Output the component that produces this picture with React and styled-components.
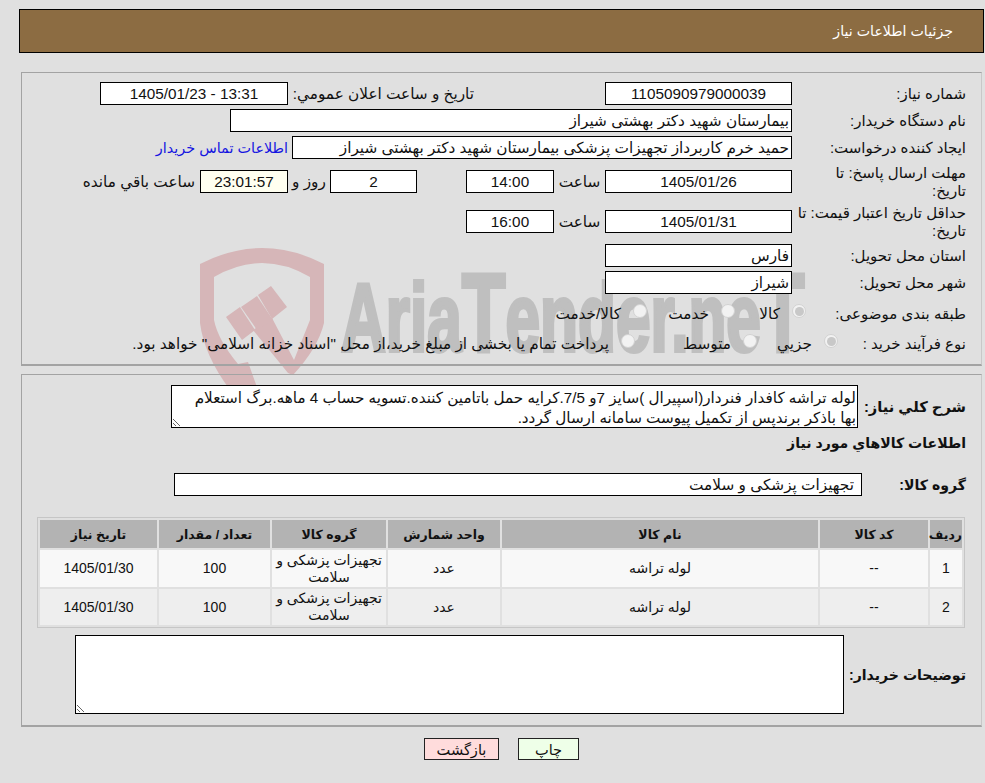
import React from 'react';
import styled, { createGlobalStyle } from 'styled-components';

const GlobalStyle = createGlobalStyle`
  html {
    background: #e0e0e0;
  }
  body {
    margin: 0;
    width: 985px;
    height: 783px;
    overflow: hidden;
    font-family: "Liberation Sans", "DejaVu Sans", sans-serif;
    font-size: 15.3px;
    color: #111;
  }
`;

const Page = styled.div`
  position: relative;
  direction: rtl;
  width: 985px;
  height: 783px;
  padding: 9px 1px 0 19px;
  box-sizing: border-box;
`;

const Watermark = styled.svg`
  position: absolute;
  z-index: -1;
  left: 190px;
  top: 240px;
  width: 640px;
  height: 160px;
  pointer-events: none;
`;

const Header = styled.header`
  height: 44px;
  box-sizing: border-box;
  border: 1px solid #000;
  background: #8c6c42;
  color: #fff;
  font-size: 14.2px;
  display: flex;
  align-items: center;
  padding: 0 30px 0 0;
`;

const Panel = styled.section`
  box-sizing: border-box;
  margin: ${p => p.$top}px 2px 0 2px;
  height: ${p => p.$height}px;
  border: 1px solid #a3a3a3;
  border-right-color: #c8c8c8;
  border-bottom-width: 2px;
  padding: ${p => p.$pad};
`;

const Row = styled.div`
  display: flex;
  align-items: center;
  height: ${p => p.$h || 23}px;
  margin-top: ${p => p.$top || 0}px;
  margin-bottom: ${p => p.$gap ?? 4}px;
`;

const Label = styled.div`
  width: ${p => p.$w || 174}px;
  flex: none;
  font-size: 15px;
  line-height: 18px;
  white-space: nowrap;
`;

const Box = styled.div`
  flex: none;
  box-sizing: border-box;
  width: ${p => p.$w}px;
  height: 23px;
  line-height: 21px;
  border: 1px solid #000;
  background: ${p => p.$bg || '#fff'};
  text-align: ${p => (p.$left ? 'right' : 'center')};
  padding: 0 ${p => p.$inset || 2}px 0 2px;
  white-space: nowrap;
  overflow: hidden;
  margin-left: ${p => p.$after || 0}px;
`;

const Inline = styled.span`
  flex: none;
  width: ${p => (p.$w ? `${p.$w}px` : 'auto')};
  text-align: ${p => (p.$center ? 'center' : 'right')};
  white-space: nowrap;
  margin-right: ${p => p.$before || 0}px;
`;

const ContactLink = styled.a`
  color: #1515e0;
  font-size: 14.4px;
  text-decoration: none;
  white-space: nowrap;
  margin-right: 4px;
`;

const Option = styled.label`
  flex: none;
  display: flex;
  align-items: center;
  gap: 12px;
  width: ${p => (p.$w ? `${p.$w}px` : 'auto')};
  white-space: nowrap;
`;

const Radio = styled.span`
  flex: none;
  display: inline-flex;
  align-items: center;
  justify-content: center;
  box-sizing: border-box;
  width: 14px;
  height: 14px;
  margin-bottom: 5px;
  border-radius: 50%;
  border: 1px solid #d2d2d2;
  background: #f2f2f2;
  &::after {
    content: '';
    display: ${p => (p.$on ? 'block' : 'none')};
    width: 9px;
    height: 9px;
    border-radius: 50%;
    background: #c8c8c8;
  }
`;

const Note = styled.textarea`
  display: block;
  flex: none;
  box-sizing: border-box;
  direction: rtl;
  width: ${p => p.$w}px;
  height: ${p => p.$h}px;
  margin: 0;
  padding: 2px 1px 0 2px;
  border: 1px solid #000;
  border-radius: 0;
  outline: none;
  background: #fff;
  color: #111;
  font: inherit;
  font-size: 15.2px;
  line-height: 20px;
  overflow: hidden;
`;

const BoldLabel = styled.div`
  flex: none;
  width: ${p => p.$w}px;
  font-weight: bold;
  font-size: ${p => p.$size || 14.1}px;
  white-space: nowrap;
`;

const SectionTitle = styled.div`
  font-weight: bold;
  font-size: 14.1px;
  height: 20px;
  line-height: 20px;
`;

const Goods = styled.table`
  width: 928px;
  margin: 0 1px 0 auto;
  border: 1px solid #c6c6c6;
  border-spacing: 2px;
  border-collapse: separate;
  table-layout: fixed;
  text-align: center;
  font-size: 14px;
  th {
    background: #b3b3b3;
    height: 28px;
    padding: 0;
    font-size: 12.5px;
  }
  td {
    padding: 0;
    height: 36px;
    line-height: 17px;
  }
  tbody tr:first-child td {
    height: 37px;
  }
  tbody tr:nth-child(odd) td {
    background: #f8f8f8;
  }
  tbody tr:nth-child(even) td {
    background: #eeeeee;
  }
`;

const Actions = styled.div`
  display: flex;
  justify-content: center;
  gap: 19px;
  margin-top: 11px;
`;

const ActionButton = styled.button`
  box-sizing: border-box;
  width: ${p => p.$w}px;
  height: 22px;
  padding: 0;
  border: 1px solid #222;
  border-radius: 0;
  background: ${p => p.$bg};
  color: #111;
  font: inherit;
  font-size: 14.6px;
`;

const columns = [
  { title: 'ردیف', width: 32 },
  { title: 'کد کالا', width: 108 },
  { title: 'نام کالا', width: 316 },
  { title: 'واحد شمارش', width: 112 },
  { title: 'گروه کالا', width: 114 },
  { title: 'تعداد / مقدار', width: 111 },
  { title: 'تاریخ نیاز', width: 117 },
];

const rows = [
  { id: 1, date: '1405/01/30' },
  { id: 2, date: '1405/01/30' },
];

function WatermarkLogo() {
  return (
    <Watermark viewBox="0 0 640 160">
      <path
        fill="#d6b6b8"
        d="M10 24 Q72 -8 134 24 L134 83 Q128 108 103 135 L98 133 L63 90 L82 78 L104 120 L120 80 L120 37 Q72 9 24 37 L24 80 Q28 100 48 124 L58 122 L68 150 L40 150 Q14 115 10 83 Z"
      />
      <path fill="#d6b6b8" d="M36 77 L50 67 L65 90 L52 100 Z" />
      <path fill="#d6b6b8" d="M51 67 L67 56 L83 80 L67 90 Z" />
      <path fill="#d6b6b8" d="M68 55 L81 46 L97 67 L82 79 Z" />
      <text
        transform="translate(151 111) scale(0.64 1)"
        fill="#bfbfbf"
        stroke="#bfbfbf"
        strokeWidth="4"
        fontFamily="Liberation Sans, sans-serif"
        fontWeight="bold"
        fontSize="97"
        direction="ltr"
      >
        Aria<tspan fontSize="112">T</tspan>ender.ne<tspan fontSize="112">T</tspan>
      </text>
    </Watermark>
  );
}

export default function App() {
  return (
    <>
      <GlobalStyle />
      <Page>
        <WatermarkLogo />
        <Header>جزئیات اطلاعات نیاز</Header>

        <Panel $top={19} $height={294} $pad="9px 15px 0 0">
          <Row>
            <Label>شماره نیاز:</Label>
            <Box $w={187}>1105090979000039</Box>
            <Inline $w={186} $before={131}>تاریخ و ساعت اعلان عمومي:</Inline>
            <Box $w={188}>13:31 - 1405/01/23</Box>
          </Row>
          <Row>
            <Label>نام دستگاه خریدار:</Label>
            <Box $w={562} $left>بیمارستان شهید دکتر بهشتی شیراز</Box>
          </Row>
          <Row $gap={11}>
            <Label>ایجاد کننده درخواست:</Label>
            <Box $w={500} $left>حمید خرم کاربرداز تجهیزات پزشکی بیمارستان شهید دکتر بهشتی شیراز</Box>
            <ContactLink href="#">اطلاعات تماس خریدار</ContactLink>
          </Row>
          <Row $gap={17}>
            <Label>مهلت ارسال پاسخ: تا<br />تاریخ:</Label>
            <Box $w={187}>1405/01/26</Box>
            <Inline $w={51} $center>ساعت</Inline>
            <Box $w={88} $after={49}>14:00</Box>
            <Box $w={87}>2</Box>
            <Inline $w={42} $center>روز و</Inline>
            <Box $w={88} $bg="#fffff0" $after={5}>23:01:57</Box>
            <Inline>ساعت باقي مانده</Inline>
          </Row>
          <Row $gap={11}>
            <Label>حداقل تاریخ اعتبار قیمت: تا<br />تاریخ:</Label>
            <Box $w={187}>1405/01/31</Box>
            <Inline $w={51} $center>ساعت</Inline>
            <Box $w={88}>16:00</Box>
          </Row>
          <Row>
            <Label>استان محل تحویل:</Label>
            <Box $w={187} $left>فارس</Box>
          </Row>
          <Row $gap={8}>
            <Label>شهر محل تحویل:</Label>
            <Box $w={187} $left>شیراز</Box>
          </Row>
          <Row $gap={7}>
            <Label $w={160}>طبقه بندی موضوعی:</Label>
            <Option $w={71}><Radio $on />کالا</Option>
            <Option $w={88}><Radio />خدمت</Option>
            <Option><Radio />کالا/خدمت</Option>
          </Row>
          <Row>
            <Label $w={128}>نوع فرآیند خرید :</Label>
            <Option $w={81}><Radio $on />جزيي</Option>
            <Option $w={122}><Radio />متوسط</Option>
            <Option><Radio />پرداخت تمام یا بخشی از مبلغ خرید،از محل "اسناد خزانه اسلامی" خواهد بود.</Option>
          </Row>
        </Panel>

        <Panel $top={8} $height={353} $pad="10px 15px 0 0">
          <Row $h={43} $gap={5}>
            <BoldLabel $w={108} $size={14.7}>شرح کلي نیاز:</BoldLabel>
            <Note
              $w={687}
              $h={43}
              readOnly
              defaultValue={'لوله تراشه کافدار فنردار(اسپیرال )سایز 7و 7/5.کرایه حمل باتامین کننده.تسویه حساب 4 ماهه.برگ استعلام\nبها باذکر برندپس از تکمیل پیوست سامانه ارسال گردد.'}
            />
          </Row>
          <SectionTitle>اطلاعات کالاهاي مورد نیاز</SectionTitle>
          <Row $top={20} $gap={21}>
            <BoldLabel $w={104}>گروه کالا:</BoldLabel>
            <Box $w={688} $left $inset={7}>تجهیزات پزشکی و سلامت</Box>
          </Row>
          <Goods>
            <colgroup>
              {columns.map(c => (
                <col key={c.title} width={c.width} />
              ))}
            </colgroup>
            <thead>
              <tr>
                {columns.map(c => (
                  <th key={c.title}>{c.title}</th>
                ))}
              </tr>
            </thead>
            <tbody>
              {rows.map(r => (
                <tr key={r.id}>
                  <td>{r.id}</td>
                  <td>--</td>
                  <td>لوله تراشه</td>
                  <td>عدد</td>
                  <td>تجهیزات پزشکی و سلامت</td>
                  <td>100</td>
                  <td>{r.date}</td>
                </tr>
              ))}
            </tbody>
          </Goods>
          <Row $h={79} $top={7}>
            <BoldLabel $w={122}>توضیحات خریدار:</BoldLabel>
            <Note $w={769} $h={79} readOnly defaultValue="" />
          </Row>
        </Panel>

        <Actions>
          <ActionButton $w={61} $bg="#eeffe8">چاپ</ActionButton>
          <ActionButton $w={75} $bg="#ffdcdc">بازگشت</ActionButton>
        </Actions>
      </Page>
    </>
  );
}
